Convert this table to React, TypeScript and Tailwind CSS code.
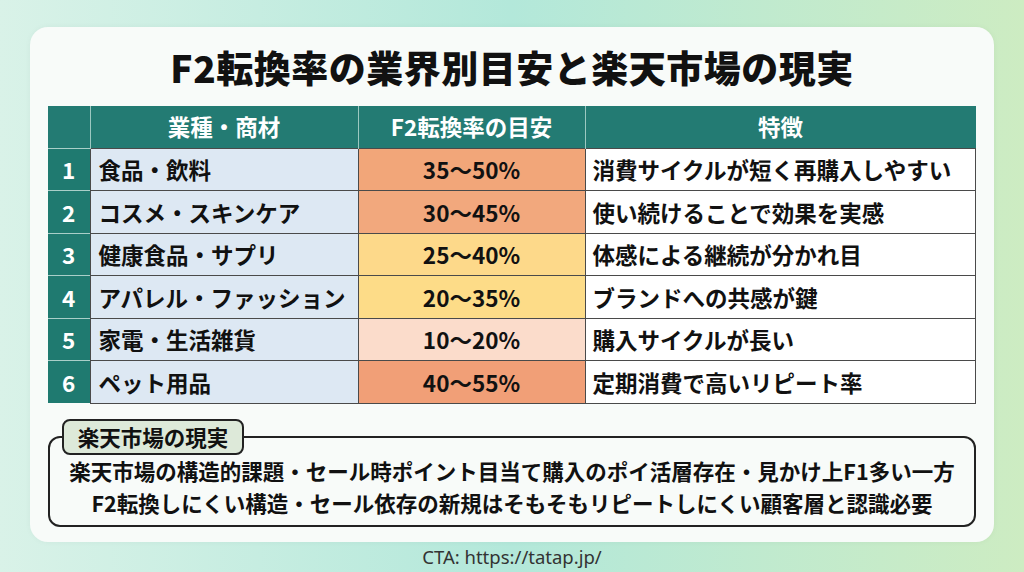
const rows = [
  { no: 1, name: "食品・飲料", rate: "35〜50%", rateBg: "bg-[#f2a679]", note: "消費サイクルが短く再購入しやすい" },
  { no: 2, name: "コスメ・スキンケア", rate: "30〜45%", rateBg: "bg-[#f2a87d]", note: "使い続けることで効果を実感" },
  { no: 3, name: "健康食品・サプリ", rate: "25〜40%", rateBg: "bg-[#fdd98a]", note: "体感による継続が分かれ目" },
  { no: 4, name: "アパレル・ファッション", rate: "20〜35%", rateBg: "bg-[#fddc88]", note: "ブランドへの共感が鍵" },
  { no: 5, name: "家電・生活雑貨", rate: "10〜20%", rateBg: "bg-[#fbdccb]", note: "購入サイクルが長い" },
  { no: 6, name: "ペット用品", rate: "40〜55%", rateBg: "bg-[#f19f77]", note: "定期消費で高いリピート率" },
];

const font = { fontFamily: '"Noto Sans CJK JP", "Noto Sans", sans-serif' };

export default function App() {
  return (
    <div
      className="w-[1024px] h-[572px] overflow-hidden bg-gradient-to-r from-[#d9f2e8] via-[#b3e8da] to-[#cdecc2] pt-[27px] px-[30px] text-[#111]"
      style={font}
    >
      <div className="h-[515px] rounded-[18px] bg-[#f8fbf9] px-[18px] pt-[22px] shadow-[0_0_6px_rgba(0,0,0,0.04)]">
        <h1 className="text-center text-[37px] leading-[37px] font-black tracking-[0.5px] text-[#111]">
          F2転換率の業界別目安と楽天市場の現実
        </h1>

        <table className="mt-[20px] w-[928px] table-fixed border-collapse text-[22.5px] font-bold">
          <colgroup>
            <col className="w-[42px]" />
            <col className="w-[268px]" />
            <col className="w-[227px]" />
            <col />
          </colgroup>
          <thead>
            <tr className="h-[42px] bg-[#237b73] text-white text-[22.5px]">
              <th className="border-r border-[#9cc8c1]"></th>
              <th className="border-r border-[#9cc8c1] font-semibold">業種・商材</th>
              <th className="border-r border-[#9cc8c1] font-semibold">F2転換率の目安</th>
              <th className="font-semibold">特徴</th>
            </tr>
          </thead>
          <tbody>
            {rows.map((r) => (
              <tr key={r.no} className="h-[42.5px] leading-none">
                <td className="bg-[#1f7a70] text-center text-white border-t border-[#a9cfc9]">{r.no}</td>
                <td className="bg-[#dde8f3] pl-[8px] border-[1.5px] border-[#4a4a4a] whitespace-nowrap">{r.name}</td>
                <td className={`${r.rateBg} text-center border-[1.5px] border-[#4a4a4a]`}>{r.rate}</td>
                <td className="bg-white pl-[7px] border-[1.5px] border-[#4a4a4a] whitespace-nowrap">{r.note}</td>
              </tr>
            ))}
          </tbody>
        </table>

        <div className="relative mt-[32px] h-[91px] rounded-[12px] border-2 border-[#222] pt-[17px] text-center text-[21.5px] leading-[32px] font-bold">
          <div className="absolute left-[12px] top-[-19px] flex h-[36px] w-[182px] items-center justify-center rounded-[8px] border-2 border-[#222] bg-[#dde9d9] text-[21.5px] leading-none">
            楽天市場の現実
          </div>
          <p className="whitespace-nowrap">楽天市場の構造的課題・セール時ポイント目当て購入のポイ活層存在・見かけ上F1多い一方</p>
          <p className="whitespace-nowrap">F2転換しにくい構造・セール依存の新規はそもそもリピートしにくい顧客層と認識必要</p>
        </div>
      </div>

      <div className="h-[30px] flex items-center justify-center text-[18.5px] text-[#333]" style={{ fontFamily: '"Noto Sans", "Open Sans", sans-serif' }}>
        CTA: https://tatap.jp/
      </div>
    </div>
  );
}
